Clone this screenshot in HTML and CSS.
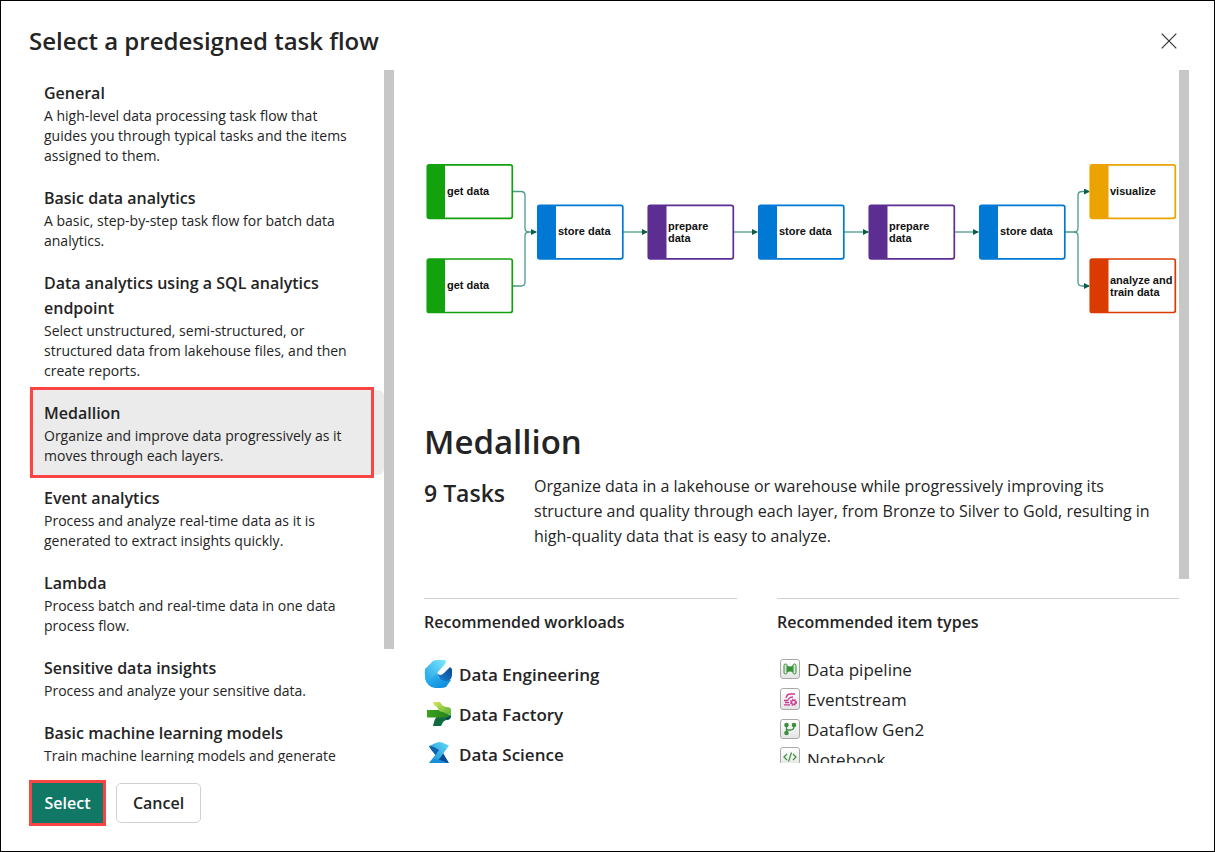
FILE: index.html
```html
<!DOCTYPE html>
<html lang="en">
<head>
<meta charset="utf-8">
<title>Select a predesigned task flow</title>
<link rel="stylesheet" href="styles.css">
</head>
<body>
<main class="dialog" role="dialog" aria-labelledby="dialog-title">
  <header class="dialog-header">
    <h1 id="dialog-title" class="dialog-title">Select a predesigned task flow</h1>
    <button class="close" type="button" aria-label="Close">
      <svg width="16" height="16" viewBox="0 0 16 16" fill="none" stroke="#333" stroke-width="1.2"><path d="M.7.7l14.6 14.6M15.3.7L.7 15.3"/></svg>
    </button>
  </header>

  <div class="dialog-body">
    <div class="flows">
      <div class="flow-list">
        <button type="button" class="flow"><span class="flow-name">General</span><span class="flow-text">A high-level data processing task flow that guides you through typical tasks and the items assigned to them.</span></button>
        <button type="button" class="flow"><span class="flow-name">Basic data analytics</span><span class="flow-text">A basic, step-by-step task flow for batch data analytics.</span></button>
        <button type="button" class="flow"><span class="flow-name">Data analytics using a SQL analytics endpoint</span><span class="flow-text">Select unstructured, semi-structured, or structured data from lakehouse files, and then create reports.</span></button>
        <button type="button" class="flow flow-selected" aria-pressed="true"><span class="flow-name">Medallion</span><span class="flow-text">Organize and improve data progressively as it moves through each layers.</span></button>
        <button type="button" class="flow"><span class="flow-name">Event analytics</span><span class="flow-text">Process and analyze real-time data as it is generated to extract insights quickly.</span></button>
        <button type="button" class="flow"><span class="flow-name">Lambda</span><span class="flow-text">Process batch and real-time data in one data process flow.</span></button>
        <button type="button" class="flow"><span class="flow-name">Sensitive data insights</span><span class="flow-text">Process and analyze your sensitive data.</span></button>
        <button type="button" class="flow"><span class="flow-name">Basic machine learning models</span><span class="flow-text">Train machine learning models and generate</span></button>
      </div>
      <div class="thumb thumb-list"></div>
    </div>

    <section class="detail">
      <div class="detail-content">
        <svg class="diagram" viewBox="0 0 755 345" role="img" aria-label="Medallion task flow">
          <defs>
            <marker id="arrow" viewBox="0 0 6 6" refX="5" refY="3" markerWidth="6" markerHeight="6" markerUnits="userSpaceOnUse" orient="auto"><path d="M0 0L6 3L0 6z" fill="#0d5c4c"/></marker>
          </defs>
          <g class="links">
            <path d="M89 121.500H97Q101 121.500 101 125.500V158Q101 162 105 162H112" marker-end="url(#arrow)"/>
            <path d="M89 216H97Q101 216 101 212V166Q101 162 105 162"/>
            <path d="M199 162H223" marker-end="url(#arrow)"/>
            <path d="M310 162H333" marker-end="url(#arrow)"/>
            <path d="M420 162H444" marker-end="url(#arrow)"/>
            <path d="M531 162H554" marker-end="url(#arrow)"/>
            <path d="M641 162H650Q654 162 654 158V125.500Q654 121.500 658 121.500H665" marker-end="url(#arrow)"/>
            <path d="M650 162Q654 162 654 166V212Q654 216 658 216H665" marker-end="url(#arrow)"/>
          </g>
          <g class="node green"><rect x="3.300" y="94.800" width="85" height="53.500" rx="2"/><path d="M3 95h18v53H3z"/></g>
          <g class="node green"><rect x="3.300" y="189" width="85" height="53.500" rx="2"/><path d="M3 189h18v53H3z"/></g>
          <g class="node blue"><rect x="113.800" y="135.300" width="85" height="53.500" rx="2"/><path d="M114 135.500h18v53h-18z"/></g>
          <g class="node purple"><rect x="224.300" y="135.300" width="85" height="53.500" rx="2"/><path d="M224.500 135.500h18v53h-18z"/></g>
          <g class="node blue"><rect x="334.800" y="135.300" width="85" height="53.500" rx="2"/><path d="M335 135.500h18v53h-18z"/></g>
          <g class="node purple"><rect x="445.300" y="135.300" width="85" height="53.500" rx="2"/><path d="M445.500 135.500h18v53h-18z"/></g>
          <g class="node blue"><rect x="555.800" y="135.300" width="85" height="53.500" rx="2"/><path d="M556 135.500h18v53h-18z"/></g>
          <g class="node gold"><rect x="666.300" y="94.800" width="85" height="53.500" rx="2"/><path d="M666.500 95h18v53h-18z"/></g>
          <g class="node orange"><rect x="666.300" y="189" width="85" height="53.500" rx="2"/><path d="M666.500 189h18v53h-18z"/></g>
          <g class="labels">
            <text x="23" y="125">get data</text>
            <text x="23" y="219">get data</text>
            <text x="134" y="165">store data</text>
            <text x="244" y="160">prepare</text><text x="244" y="172">data</text>
            <text x="355" y="165">store data</text>
            <text x="465" y="160">prepare</text><text x="465" y="172">data</text>
            <text x="576" y="165">store data</text>
            <text x="686" y="125">visualize</text>
            <text x="686" y="214">analyze and</text><text x="686" y="226">train data</text>
          </g>
        </svg>

        <h2 class="detail-title">Medallion</h2>
        <div class="summary">
          <h3 class="task-count">9 Tasks</h3>
          <p class="summary-text">Organize data in a lakehouse or warehouse while progressively improving its structure and quality through each layer, from Bronze to Silver to Gold, resulting in high-quality data that is easy to analyze.</p>
        </div>

        <div class="recommended">
          <section class="rec">
            <h4 class="rec-title">Recommended workloads</h4>
            <ul class="workloads">
              <li><svg width="28" height="28" viewBox="0 0 28 28">
                <defs>
                  <linearGradient id="e1" x1="1" y1="0" x2="0" y2="1"><stop offset="0" stop-color="#7deaff"/><stop offset="1" stop-color="#1b9de2"/></linearGradient>
                  <linearGradient id="e2" x1="0" y1="0" x2="1" y2="1"><stop offset="0" stop-color="#32bdf2"/><stop offset="1" stop-color="#0a84dc"/></linearGradient>
                  <linearGradient id="e3" x1="0" y1="1" x2="1" y2="0"><stop offset="0" stop-color="#1b86d9"/><stop offset="1" stop-color="#0c468c"/></linearGradient>
                </defs>
                <path d="M1 9L9 1Q11 0 14 0h5q5 0 2 4l-7 8-5 9-6 2q-3-5-2-14z" fill="url(#e1)"/>
                <path d="M1 14q2 5 7 4l5-5 2 5 12 2-5 7q-2 1-6 1h-5Q3 27 1 18z" fill="url(#e2)"/>
                <path d="M13 13q3 4 7 0l6-6 2 2v6q0 5-5 6-7 1-10-8z" fill="url(#e3)"/>
              </svg>Data Engineering</li>
              <li><svg width="28" height="28" viewBox="0 0 28 28">
                <defs>
                  <linearGradient id="f1" x1="0" y1="0" x2="1" y2="1"><stop offset="0" stop-color="#d5e85a"/><stop offset="1" stop-color="#53ae38"/></linearGradient>
                  <linearGradient id="f2" x1="0" y1="0" x2="1" y2="0"><stop offset="0" stop-color="#3aa21a"/><stop offset="1" stop-color="#258020"/></linearGradient>
                </defs>
                <path d="M9 26l1-4q1-5 6-7l10 0v2q-1 3-4 3-3 1-4 4l-1 2z" fill="#116b40"/>
                <path d="M3 10h15l9 6-2 2q-2 0-5-.500H3z" fill="url(#f2)"/>
                <path d="M9 2h7l2 3q2 2 5 2 4 0 4 3v5q-5-1-8-3-4 0-5-3-1-3-4-4z" fill="url(#f1)"/>
                <path d="M21 18q3 0 6-3v2q-1 3-4 3z" fill="#084b5f"/>
              </svg>Data Factory</li>
              <li><svg width="28" height="28" viewBox="0 0 28 28">
                <defs><linearGradient id="s1" x1="0" y1="1" x2="1" y2="0"><stop offset="0" stop-color="#1489d8"/><stop offset="1" stop-color="#63dcf5"/></linearGradient></defs>
                <path d="M16 13h3l6 10H13z" fill="#0a4b91"/>
                <path d="M5 6l10 3 2 9-5-2z" fill="#0c559c"/>
                <path d="M5 6l8-3.500q2-1 5 0l7 3L16 18l-5 5H5l7-9 3-4z" fill="url(#s1)"/>
                <path d="M5 6q5 0 9 4l-2 4q-5-3-7-8z" fill="#0f62ab"/>
                <path d="M5 23l5-4 6 1 8 3z" fill="#168fdb"/>
              </svg>Data Science</li>
            </ul>
          </section>
          <section class="rec">
            <h4 class="rec-title">Recommended item types</h4>
            <ul class="items">
              <li><svg class="tile" width="20" height="20" viewBox="1 1 18 18"><g fill="#d2e8d0" stroke="#3b8f3d"><rect x="4" y="5" width="3" height="10" rx="1.500"/><rect x="13" y="5" width="3" height="10" rx="1.500"/></g><path d="M7 6.500q3 2 6 0v7q-3-2-6 0z" fill="#3b8f3d"/></svg>Data pipeline</li>
              <li><svg class="tile" width="20" height="22" viewBox="1 1 18 18"><g fill="none" stroke="#d13a96" stroke-width="1.300"><path d="M6 9q1-4 4-4h5M4 11.500h3q1 0 2-2Q10 8 13 8M5 13.500h4M4 15.800h6"/><circle cx="13.500" cy="13.300" r="2"/><circle cx="13.500" cy="13.300" r="2.900" stroke-dasharray="1.400 1"/></g></svg>Eventstream</li>
              <li><svg class="tile" width="20" height="20" viewBox="1 1 18 18"><path d="M6.500 6v8M6.500 11h4q3.500 0 3.500-4" fill="none" stroke="#3b8f3d" stroke-width="1.300"/><g fill="#3b8f3d"><circle cx="6.500" cy="6" r="2.300"/><circle cx="14" cy="6" r="2.300"/><circle cx="6.500" cy="14" r="2.300"/></g></svg>Dataflow Gen2</li>
              <li class="item-lifted"><svg class="tile" width="18" height="20" viewBox="1 1 18 18"><path d="M7 7L4 10l3 3M13 7l3 3-3 3M11.500 5.500l-3 9" fill="none" stroke="#3b8f3d" stroke-width="1.200"/></svg>Notebook</li>
            </ul>
          </section>
        </div>
      </div>
      <div class="thumb thumb-detail"></div>
    </section>
  </div>

  <footer class="dialog-footer">
    <button type="button" class="button primary">Select</button>
    <button type="button" class="button">Cancel</button>
  </footer>
</main>
</body>
</html>
```
FILE: styles.css
```css
* { box-sizing: border-box; }
body { margin: 0; background: #fff; color: #242424; font-family: "Open Sans", "Noto Sans", sans-serif; }
h1, h2, h3, h4, p, ul { margin: 0; padding: 0; }
ul { list-style: none; }
button { font: inherit; color: inherit; cursor: pointer; }

.dialog { display: flex; flex-direction: column; height: 100vh; border: 1px solid #000; }
.dialog-header { display: flex; justify-content: space-between; align-items: center; padding: 20px 37px 9px 28px; }
.dialog-title { font-size: 24px; line-height: 40px; font-weight: 600; }
.close { display: flex; padding: 0; border: 0; background: none; }

.dialog-body { display: flex; flex: 1; min-height: 0; padding: 0 25px 0 28px; gap: 30px; }
.flows { display: flex; flex: 0 0 365px; overflow: hidden; }
.flow-list { flex: 1; min-width: 0; }
.flow { display: block; position: relative; width: 100%; padding: 11px 24px 9px 15px; border: 0; border-radius: 6px; background: none; text-align: left; }
.flow-name { display: block; font-size: 16px; line-height: 25px; font-weight: 600; }
.flow-text { display: block; font-size: 14px; line-height: 20px; }
.flow-selected { background: #ebebeb; }
.flow-selected::after { content: ""; position: absolute; inset: -3px 10px -3px 1px; border: 3px solid #fc4444; }
.thumb { flex: 0 0 10px; background: #c7c7c7; }
.thumb-list { height: 83.5%; }
.thumb-detail { height: 73.5%; }

.detail { display: flex; flex: 1; min-width: 0; overflow: hidden; }
.detail-content { flex: 1; min-width: 0; }
.diagram { display: block; width: 100%; }
.links { fill: none; stroke: #4a9b89; stroke-width: 1.3; }
.node rect { fill: #fff; stroke-width: 1.7; }
.green { fill: #13a10e; stroke: #13a10e; }
.blue { fill: #0078d4; stroke: #0078d4; }
.purple { fill: #5c2e91; stroke: #5c2e91; }
.gold { fill: #eaa300; stroke: #eaa300; }
.orange { fill: #da3b01; stroke: #da3b01; }
.node path { stroke: none; }
.labels { font: bold 11px "Liberation Sans", Arial, sans-serif; fill: #111; }

.detail-title { font-size: 33px; line-height: 54px; font-weight: 600; }
.summary { display: flex; gap: 30px; padding: 5px 0 49px; }
.task-count { flex: 0 0 80px; min-width: 0; font-size: 23px; line-height: 38px; font-weight: 600; white-space: nowrap; }
.summary-text { flex: 1; min-width: 0; padding-right: 10px; font-size: 16px; line-height: 25px; }
.recommended { display: grid; grid-template-columns: 313fr 402fr; gap: 40px; }
.rec { border-top: 1px solid #d1d1d1; padding-top: 11px; }
.rec-title { font-size: 16px; line-height: 25px; font-weight: 600; }
.workloads { padding-top: 19px; }
.workloads li { display: flex; align-items: center; gap: 7px; height: 40px; font-size: 17px; font-weight: 600; }
.items { padding-top: 19px; }
.items li { display: flex; align-items: center; gap: 7px; height: 30px; padding-left: 3px; font-size: 17px; }
.tile { border: 1px solid #a9a9a9; border-radius: 3px; background: linear-gradient(#fff, #e4e4e4); }
.item-lifted .tile { width: 20px; margin-bottom: 4px; }

.dialog-footer { display: flex; gap: 13px; padding: 20px 31px 28px; }
.button { min-width: 85px; height: 40px; padding: 0 11px; border: 1px solid #d1d1d1; border-radius: 5px; background: #fff; font-size: 16px; font-weight: 600; }
.primary { min-width: 71px; border: 0; border-radius: 0; background: #117865; color: #fff; outline: 3px solid #fc4444; }
```
